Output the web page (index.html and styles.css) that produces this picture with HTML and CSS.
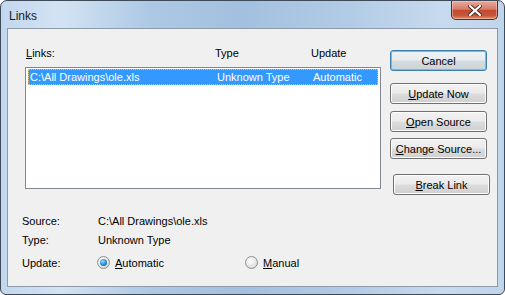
FILE: index.html
```html
<!DOCTYPE html>
<html lang="en">
<head>
    <meta charset="UTF-8">
    <title>Links</title>
    <link rel="stylesheet" href="styles.css">
</head>
<body>
    <div class="window">
        <div class="titlebar">
            <span class="title">Links</span>
            <button class="close-btn" title="Close">
                <svg width="14" height="11" viewBox="0 0 14 11">
                    <path d="M2 1 L12 10 M12 1 L2 10" stroke="#4a2a22" stroke-width="4" stroke-linecap="square"/>
                    <path d="M2 1 L12 10 M12 1 L2 10" stroke="#ffffff" stroke-width="2.2" stroke-linecap="square"/>
                </svg>
            </button>
        </div>

        <div class="client">
            <div class="main">
                <div class="links-panel">
                    <div class="list-head">
                        <span><u>L</u>inks:</span>
                        <span>Type</span>
                        <span>Update</span>
                    </div>
                    <div class="listbox">
                        <div class="row selected">
                            <span>C:\All Drawings\ole.xls</span>
                            <span>Unknown Type</span>
                            <span>Automatic</span>
                        </div>
                    </div>
                </div>

                <div class="actions">
                    <button class="btn default">Cancel</button>
                    <button class="btn btn-update"><u>U</u>pdate Now</button>
                    <button class="btn btn-open"><u>O</u>pen Source</button>
                    <button class="btn btn-change"><u>C</u>hange Source...</button>
                    <button class="btn btn-break"><u>B</u>reak Link</button>
                </div>
            </div>

            <div class="details">
                <div class="detail-row">
                    <span class="label">Source:</span>
                    <span>C:\All Drawings\ole.xls</span>
                </div>
                <div class="detail-row">
                    <span class="label">Type:</span>
                    <span>Unknown Type</span>
                </div>
                <div class="detail-row update-row">
                    <span class="label">Update:</span>
                    <div class="radios">
                        <label class="radio radio-auto"><span class="dot checked"></span><span><u>A</u>utomatic</span></label>
                        <label class="radio"><span class="dot"></span><span><u>M</u>anual</span></label>
                    </div>
                </div>
            </div>
        </div>
    </div>
</body>
</html>
```

FILE: styles.css
```css
body {
    margin: 0;
    background: #ffffff;
    font-family: "Liberation Sans", Arial, sans-serif;
    font-size: 11px;
    color: #000;
}
.window {
    width: 505px;
    height: 295px;
    box-sizing: border-box;
    border: 1px solid #3e4a57;
    border-radius: 7px 7px 6px 6px;
    background: linear-gradient(90deg, #c2d7ee 0%, #d3e3f3 12%, #acc8e4 30%, #a2c0df 48%, #b3cce6 70%, #c7daee 88%, #bfd5ec 100%);
    padding: 0 6px 7px 6px;
    display: flex;
    flex-direction: column;
}
.titlebar {
    height: 27px;
    display: flex;
    align-items: flex-start;
    justify-content: space-between;
}
.title {
    font-size: 12px;
    color: #1b1b1b;
    margin: 8px 0 0 2px;
}
.close-btn {
    width: 47px;
    height: 19px;
    padding: 0;
    border: 1px solid #5b2a22;
    border-top: none;
    border-radius: 0 0 5px 5px;
    background: linear-gradient(180deg, #e7a99c 0%, #d87e6a 45%, #c24a30 52%, #c9553a 80%, #e0906e 100%);
    display: flex;
    align-items: center;
    justify-content: center;
    box-shadow: inset 0 0 0 1px rgba(255, 220, 210, 0.45);
}
.client {
    flex: 1;
    border: 1px solid #8e9aa8;
    background: #f0f0f0;
    padding: 17px 0 0 0;
}
.main {
    display: flex;
    align-items: flex-start;
}
.links-panel {
    margin-left: 17px;
    width: 356px;
}
.list-head {
    height: 21px;
    display: grid;
    grid-template-columns: 189px 96px 1fr;
    padding-left: 1px;
    line-height: 14px;
}
.listbox {
    height: 122px;
    box-sizing: border-box;
    border: 1px solid #828790;
    background: #fff;
    padding: 1px 2px;
}
.row {
    height: 16px;
    box-sizing: border-box;
    display: grid;
    grid-template-columns: 187px 96px 1fr;
    padding-left: 1px;
    line-height: 14px;
}
.row.selected {
    background: #3399ff;
    color: #fff;
    border: 1px dotted #d8c080;
}
.actions {
    margin: 4px 0 0 9px;
    display: flex;
    flex-direction: column;
    width: 97px;
}
.btn {
    height: 21px;
    width: 97px;
    padding: 0;
    font-family: inherit;
    font-size: 11px;
    color: #000;
    border: 1px solid #707070;
    border-radius: 3px;
    background: linear-gradient(180deg, #f2f2f2 0%, #ebebeb 48%, #dddddd 52%, #cfcfcf 100%);
    box-shadow: inset 0 0 0 1px #fcfcfc;
}
.btn.default {
    border-color: #3c7fb1;
    box-shadow: inset 0 0 0 1px #48d0f5;
    background: linear-gradient(180deg, #eef3f6 0%, #e6ebee 48%, #d6dde1 52%, #cbd3d7 100%);
}
.btn-update {
    margin-top: 12px;
}
.btn-open {
    margin-top: 7px;
}
.btn-change {
    margin-top: 6px;
}
.btn-break {
    margin: 15px 0 0 3px;
}
.details {
    margin-top: 16px;
    padding-left: 14px;
}
.detail-row {
    height: 19px;
    display: flex;
    align-items: center;
}
.label {
    width: 76px;
}
.update-row {
    margin-top: 4px;
}
.radios {
    display: flex;
    align-items: center;
    margin-left: -1px;
}
.radio {
    display: flex;
    align-items: center;
    gap: 5px;
}
.radio-auto {
    width: 148px;
}
.dot {
    width: 13px;
    height: 13px;
    box-sizing: border-box;
    border-radius: 50%;
    border: 1px solid #8e8f8f;
    background: radial-gradient(circle at 40% 35%, #ffffff 0%, #e6e6e6 55%, #c8c8c8 100%);
    position: relative;
}
.dot.checked::after {
    content: "";
    position: absolute;
    left: 2px;
    top: 2px;
    width: 7px;
    height: 7px;
    border-radius: 50%;
    background: radial-gradient(circle at 40% 35%, #9adcff 0%, #2c8fd8 50%, #0f4f8c 100%);
}
```
